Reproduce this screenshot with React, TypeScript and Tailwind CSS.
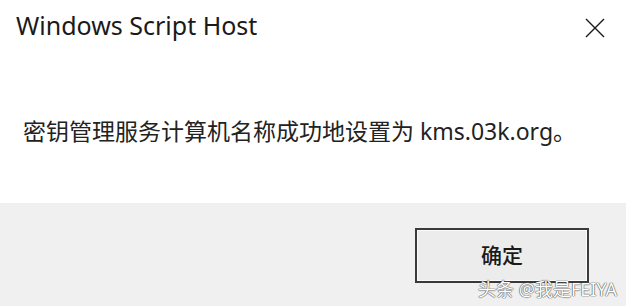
export default function App() {
  return (
    <div
      className="relative flex h-[306px] w-[626px] flex-col overflow-hidden bg-[#f0f0f0]"
      style={{ fontFamily: '"Noto Sans", "Noto Sans CJK SC", sans-serif' }}
    >
      <div className="flex h-[203px] flex-col bg-white">
        <div className="flex h-[56px] items-start justify-between">
          <div className="pl-[16px] pt-[9px] text-[25px] leading-[32px] text-[#1a1a1a]">
            Windows Script Host
          </div>
          <button className="mr-[21px] mt-[18px] flex h-[20px] w-[20px] items-center justify-center">
            <svg width="20" height="20" viewBox="0 0 20 20" fill="none">
              <path d="M1 1L19 19M19 1L1 19" stroke="#1a1a1a" strokeWidth="1.4" />
            </svg>
          </button>
        </div>
        <div className="pl-[23px] pt-[59px] text-[23px] leading-[32px] text-[#222]">
          密钥管理服务计算机名称成功地设置为 kms.03k.org。
        </div>
      </div>
      <div className="flex flex-1 items-start justify-end pr-[37px] pt-[25px]">
        <button className="flex h-[55px] w-[174px] items-center justify-center border-2 border-[#3a3a3a] bg-[#ececec] shadow-[inset_0_0_0_1px_#fafafa]">
          <span className="text-[21px] font-medium text-[#1a1a1a]">确定</span>
        </button>
      </div>
      <div
        className="pointer-events-none absolute bottom-[6px] right-[9px] text-[18px] leading-[22px] text-white"
        style={{ textShadow: "0 0 1px #555, 0 0 1px #555, 0 0 1px #555" }}
      >
        头条 @我是FEIYA
      </div>
    </div>
  );
}
